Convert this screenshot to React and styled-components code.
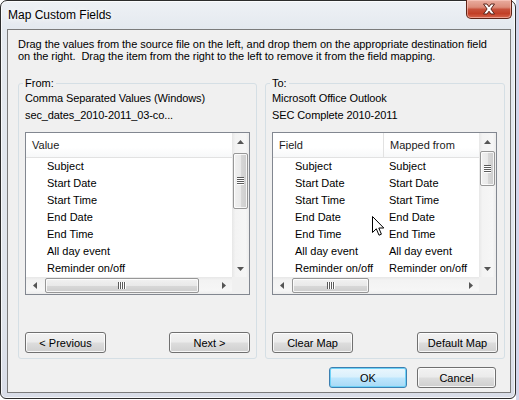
import React from "react";
import styled, { createGlobalStyle, css } from "styled-components";

const Global = createGlobalStyle`
  html, body { margin: 0; padding: 0; background: #fff; }
  body {
    font-family: "Liberation Sans", Arial, sans-serif;
    font-size: 11px;
    color: #000;
  }
  #root { width: 519px; height: 400px; overflow: hidden; }
`;

const Page = styled.div`
  width: 519px;
  height: 400px;
  background: linear-gradient(to right, #fff 0, #fff 516px, #d3d5ea 516px);
`;

const Window = styled.div`
  width: 516px;
  height: 399px;
  box-sizing: border-box;
  border: 1px solid #2c2c2c;
  border-radius: 7px 7px 6px 6px;
  background: linear-gradient(180deg, #eef1f5 0%, #e4e9ef 28px, #dfe4eb 80%, #d9dde8 100%);
  box-shadow: inset 0 0 0 1px rgba(255, 255, 255, 0.75);
  display: flex;
  flex-direction: column;
  padding: 0 4px 5px 6px;
`;

const TitleBar = styled.div`
  height: 28px;
  display: flex;
  align-items: flex-start;
  justify-content: space-between;
`;

const Title = styled.div`
  margin: 7px 0 0 1px;
  font-size: 12px;
  line-height: 14px;
  color: #000;
  text-shadow: 0 0 6px #fff, 0 0 10px #fff;
`;

const CloseButton = styled.div`
  width: 46px;
  height: 19px;
  margin: -1px -1px 0 0;
  box-sizing: border-box;
  border: 1px solid #5f2417;
  border-top: none;
  border-radius: 0 0 5px 5px;
  background: linear-gradient(180deg, #e9ad9f 0%, #dc8c7a 40%, #c7513b 52%, #c23f26 75%, #d6664c 100%);
  box-shadow: inset 0 0 0 1px rgba(255, 210, 200, 0.55);
  display: flex;
  align-items: center;
  justify-content: center;
`;

const Client = styled.div`
  flex: 1;
  border: 1px solid #7b7b7b;
  background: #f0f0f0;
  display: flex;
  flex-direction: column;
  padding: 8px 4px 4px 10px;
`;

const Instructions = styled.div`
  line-height: 12px;
  letter-spacing: -0.05px;
`;

const Groups = styled.div`
  display: grid;
  grid-template-columns: 239px 240px;
  column-gap: 8px;
  margin-top: 15px;
`;

const GroupBox = styled.fieldset`
  margin: 0;
  min-width: 0;
  padding: 0 6px 5px 6px;
  border: 1px solid #d5dfe5;
  border-radius: 3px;
  display: flex;
  flex-direction: column;
`;

const Legend = styled.legend`
  padding: 0 2px;
  margin-left: -2px;
  line-height: 13px;
  font-size: 11px;
`;

const InfoLine = styled.div`
  line-height: 17px;
  white-space: nowrap;
  letter-spacing: -0.1px;
`;

const ListBox = styled.div`
  position: relative;
  width: 225px;
  height: 163px;
  box-sizing: border-box;
  margin-top: 8px;
  border: 1px solid #828790;
  background: #fff;
  display: grid;
  grid-template-columns: 1fr 17px;
  grid-template-rows: 1fr 17px;
  overflow: hidden;
`;

const Content = styled.div`
  overflow: hidden;
  min-width: 0;
`;

const Header = styled.div`
  display: flex;
  height: 24px;
  border-bottom: 1px solid #e2e2e2;
  background: linear-gradient(180deg, #ffffff 0%, #ffffff 60%, #f7f8f9 100%);
`;

const HeaderCell = styled.div`
  box-sizing: border-box;
  width: ${(p) => p.$w || "auto"};
  flex: ${(p) => (p.$w ? "none" : "1")};
  padding-left: 6px;
  line-height: 24px;
  color: #1b1b1b;
  white-space: nowrap;
  ${(p) => p.$divider && css`border-right: 1px solid #e2e2e2;`}
`;

const Row = styled.div`
  display: flex;
  height: 17px;
  line-height: 17px;
  white-space: nowrap;
`;

const Cell = styled.div`
  box-sizing: border-box;
  width: ${(p) => p.$w || "auto"};
  flex: ${(p) => (p.$w ? "none" : "1")};
  padding-left: ${(p) => p.$indent}px;
`;

const VScroll = styled.div`
  display: flex;
  flex-direction: column;
  background: linear-gradient(90deg, #e7e7e7 0%, #f3f3f3 20%, #f6f6f6 80%, #ececec 100%);
`;

const HScroll = styled.div`
  display: flex;
  background: linear-gradient(180deg, #e7e7e7 0%, #f3f3f3 20%, #f6f6f6 80%, #ececec 100%);
`;

const Corner = styled.div`
  background: #f0f0f0;
`;

const ArrowBtn = styled.div`
  flex: none;
  width: 17px;
  height: 17px;
  display: flex;
  align-items: center;
  justify-content: center;
`;

const Track = styled.div`
  flex: 1;
  display: flex;
  flex-direction: ${(p) => (p.$vertical ? "column" : "row")};
  padding: ${(p) => (p.$vertical ? "0 1px" : "1px 0")};
`;

const Thumb = styled.div`
  flex: none;
  box-sizing: border-box;
  border: 1px solid #979797;
  border-radius: 2px;
  display: flex;
  align-items: center;
  justify-content: center;
  box-shadow: inset 0 0 0 1px rgba(255, 255, 255, 0.8);
  ${(p) =>
    p.$vertical
      ? css`
          margin-top: ${p.$offset}px;
          height: ${p.$size}px;
          background: linear-gradient(90deg, #f1f1f1 0%, #e9e9e9 50%, #d8d8d8 51%, #cdcdcd 100%);
        `
      : css`
          margin-left: ${p.$offset}px;
          width: ${p.$size}px;
          background: linear-gradient(180deg, #f1f1f1 0%, #e9e9e9 50%, #d8d8d8 51%, #cdcdcd 100%);
        `}
`;

const Grip = styled.div`
  ${(p) =>
    p.$vertical
      ? css`
          width: 7px;
          height: 8px;
          background: repeating-linear-gradient(180deg, #5a5a5a 0 1px, #ffffff 1px 2px);
        `
      : css`
          width: 8px;
          height: 7px;
          background: repeating-linear-gradient(90deg, #5a5a5a 0 1px, #ffffff 1px 2px);
        `}
`;

const ButtonRow = styled.div`
  display: flex;
  justify-content: space-between;
  margin-top: 37px;
`;

const Footer = styled.div`
  display: flex;
  justify-content: flex-end;
  gap: 10px;
  margin-top: auto;
  padding-right: 10px;
`;

const Button = styled.button`
  width: ${(p) => p.$w}px;
  height: 21px;
  box-sizing: border-box;
  padding: 0;
  border: 1px solid #707070;
  border-radius: 3px;
  background: linear-gradient(180deg, #f2f2f2 0%, #ebebeb 48%, #dddddd 52%, #cfcfcf 100%);
  box-shadow: inset 0 0 0 1px rgba(255, 255, 255, 0.8);
  font-family: "Liberation Sans", Arial, sans-serif;
  font-size: 11px;
  color: #000;
  ${(p) =>
    p.$default &&
    css`
      border-color: #3c7fb1;
      background: linear-gradient(180deg, #eaf6fd 0%, #d9f0fc 48%, #bee6fd 52%, #a7d9f5 100%);
      box-shadow: inset 0 0 0 1px #6fd2f7;
    `}
`;

const Cursor = styled.svg`
  position: absolute;
  left: 99px;
  top: 83px;
  width: 13px;
  height: 21px;
  pointer-events: none;
`;

const Arrow = ({ dir }) => {
  const pts = {
    up: "0,4 3.5,0 7,4",
    down: "0,0 3.5,4 7,0",
    left: "4,0 0,3.5 4,7",
    right: "0,0 4,3.5 0,7",
  }[dir];
  const vert = dir === "up" || dir === "down";
  return (
    <svg width={vert ? 7 : 4} height={vert ? 4 : 7} viewBox={vert ? "0 0 7 4" : "0 0 4 7"}>
      <polygon points={pts} fill="#555" />
    </svg>
  );
};

const items = ["Subject", "Start Date", "Start Time", "End Date", "End Time", "All day event", "Reminder on/off"];

const Scrollbars = ({ v, h }) => (
  <>
    <VScroll>
      <ArrowBtn><Arrow dir="up" /></ArrowBtn>
      <Track $vertical>
        <Thumb $vertical $offset={v[0]} $size={v[1]}><Grip $vertical /></Thumb>
      </Track>
      <ArrowBtn><Arrow dir="down" /></ArrowBtn>
    </VScroll>
    <HScroll>
      <ArrowBtn><Arrow dir="left" /></ArrowBtn>
      <Track>
        <Thumb $offset={h[0]} $size={h[1]}><Grip /></Thumb>
      </Track>
      <ArrowBtn><Arrow dir="right" /></ArrowBtn>
    </HScroll>
    <Corner />
  </>
);

export default function App() {
  return (
    <Page>
      <Global />
      <Window>
        <TitleBar>
          <Title>Map Custom Fields</Title>
          <CloseButton>
            <svg width="14" height="12" viewBox="0 0 14 12">
              <path
                d="M1.5 1 L5 1 L7 3.8 L9 1 L12.5 1 L8.9 6 L12.5 11 L9 11 L7 8.2 L5 11 L1.5 11 L5.1 6 Z"
                fill="#fff"
                stroke="#5a2318"
                strokeWidth="1"
                strokeLinejoin="round"
              />
            </svg>
          </CloseButton>
        </TitleBar>
        <Client>
          <Instructions>
            Drag the values from the source file on the left, and drop them on the appropriate destination field
            <br />
            on the right.&nbsp; Drag the item from the right to the left to remove it from the field mapping.
          </Instructions>
          <Groups>
            <GroupBox>
              <Legend>From:</Legend>
              <InfoLine>Comma Separated Values (Windows)</InfoLine>
              <InfoLine>sec_dates_2010-2011_03-co...</InfoLine>
              <ListBox>
                <Content>
                  <Header>
                    <HeaderCell>Value</HeaderCell>
                  </Header>
                  {items.map((it) => (
                    <Row key={it}>
                      <Cell $indent={21}>{it}</Cell>
                    </Row>
                  ))}
                </Content>
                <Scrollbars v={[3, 56]} h={[2, 154]} />
              </ListBox>
              <ButtonRow>
                <Button $w={81}>&lt; Previous</Button>
                <Button $w={81}>Next &gt;</Button>
              </ButtonRow>
            </GroupBox>
            <GroupBox>
              <Legend>To:</Legend>
              <InfoLine>Microsoft Office Outlook</InfoLine>
              <InfoLine>SEC Complete 2010-2011</InfoLine>
              <ListBox>
                <Content>
                  <Header>
                    <HeaderCell $w="111px" $divider>Field</HeaderCell>
                    <HeaderCell>Mapped from</HeaderCell>
                  </Header>
                  {items.map((it) => (
                    <Row key={it}>
                      <Cell $w="111px" $indent={22}>{it}</Cell>
                      <Cell $indent={5}>{it}</Cell>
                    </Row>
                  ))}
                </Content>
                <Scrollbars v={[1, 35]} h={[2, 77]} />
                <Cursor viewBox="0 0 13 21">
                  <path
                    d="M0.5 0.5 L0.5 16.5 L4.3 12.8 L7 19.2 L9.4 18.2 L6.8 12 L11.8 12 Z"
                    fill="#fff"
                    stroke="#000"
                    strokeWidth="1"
                    strokeLinejoin="miter"
                  />
                </Cursor>
              </ListBox>
              <ButtonRow>
                <Button $w={81}>Clear Map</Button>
                <Button $w={81}>Default Map</Button>
              </ButtonRow>
            </GroupBox>
          </Groups>
          <Footer>
            <Button $w={78} $default>OK</Button>
            <Button $w={79}>Cancel</Button>
          </Footer>
        </Client>
      </Window>
    </Page>
  );
}
